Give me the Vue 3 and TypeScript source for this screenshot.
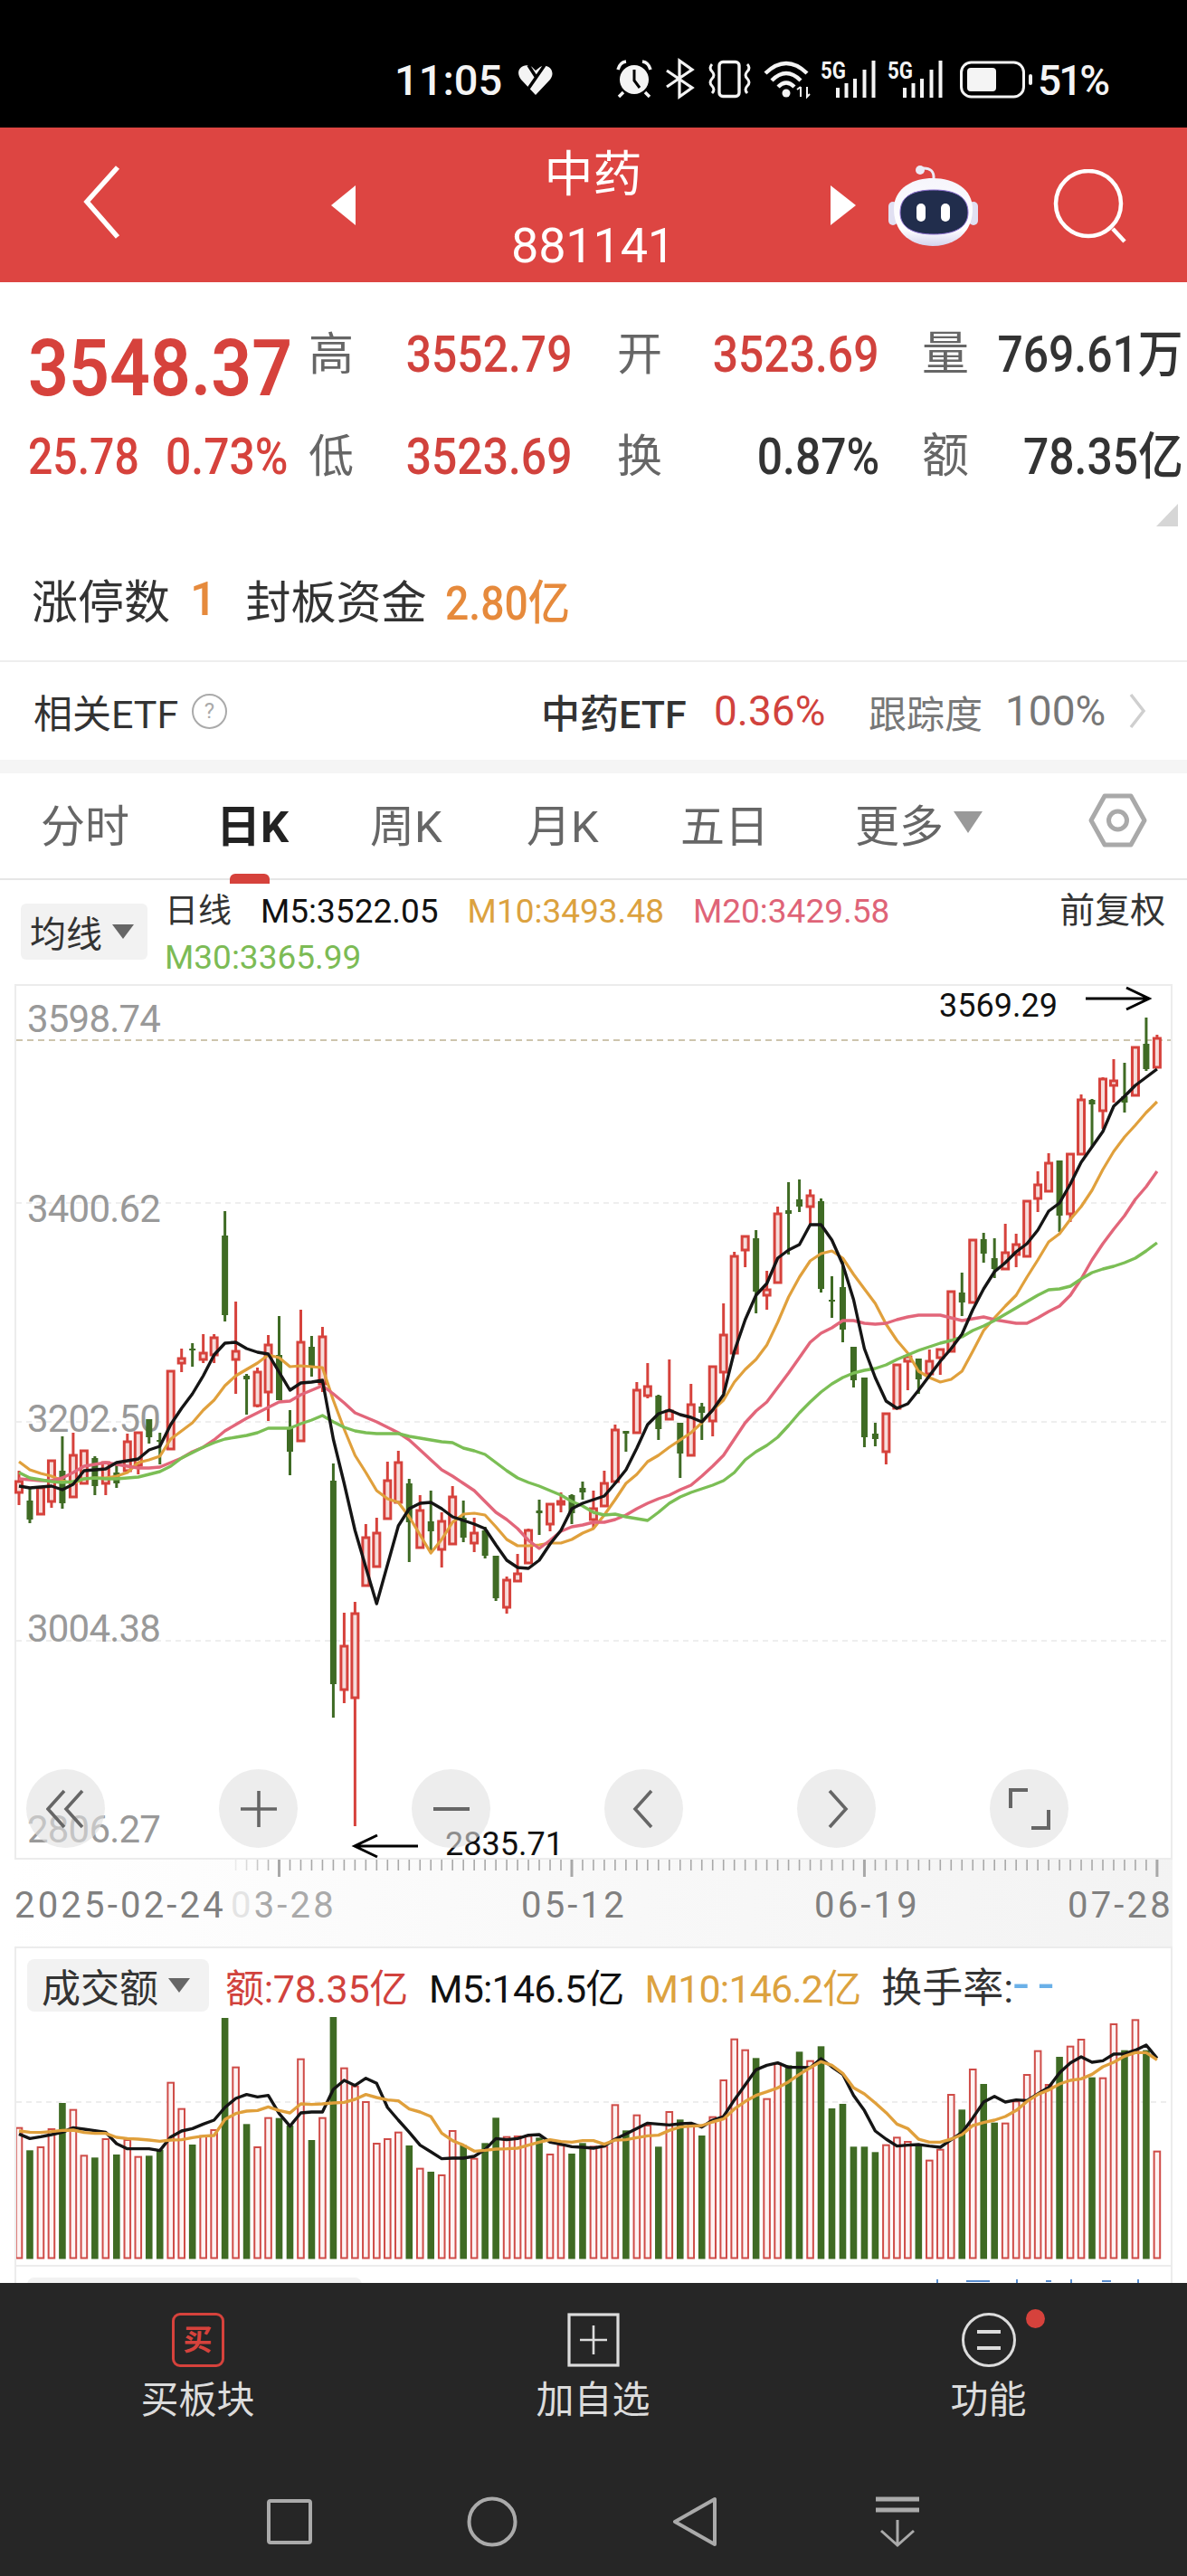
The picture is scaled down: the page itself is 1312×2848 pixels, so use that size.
<script setup lang="ts">
// Sector daily K-line page: quote header, candle chart with moving averages, turnover panel.
const STEP = 11.98
const FIRST_X = 21
const xAt = (i: number) => FIRST_X + STEP * i

const sides =
  'rgrrgrrgrg' + 'rrggrrgrrg' + 'rgrrggrgrg' + 'rrrrrrgrgr' + 'rgrggrrrgr' +
  'rggrrrgrrg' + 'rgrgrrrrgr' + 'rggrgggggg' + 'rrrgrrrgrg' + 'grrrrrgrrg' + 'rrgrgr'

// high, body top, body bottom, low (screen y)
const ohlc: number[][] = [
  [1626,1638,1650,1664],[1645,1659,1680,1684],[1645,1645,1674,1674],[1615,1615,1660,1667],
  [1588,1626,1662,1668],[1584,1609,1655,1655],[1604,1604,1640,1640],[1610,1612,1643,1653],
  [1617,1617,1640,1653],[1616,1628,1640,1645],[1585,1594,1626,1626],[1584,1584,1620,1630],
  [1569,1569,1589,1596],[1584,1592,1594,1619],[1516,1516,1602,1602],[1491,1502,1507,1517],
  [1485,1491,1493,1511],[1475,1496,1503,1507],[1475,1479,1498,1507],[1339,1366,1454,1461],
  [1439,1494,1503,1541],[1519,1521,1525,1564],[1512,1517,1554,1556],[1476,1487,1539,1571],
  [1455,1498,1548,1548],[1559,1578,1605,1631],[1448,1484,1593,1593],[1477,1489,1510,1522],
  [1467,1478,1530,1539],[1618,1637,1862,1899],[1783,1820,1868,1883],[1771,1784,1877,2019],
  [1685,1700,1753,1753],[1678,1695,1732,1732],[1616,1637,1679,1679],[1604,1617,1661,1661],
  [1635,1640,1683,1727],[1653,1670,1711,1711],[1648,1682,1693,1717],[1672,1682,1713,1733],
  [1643,1655,1707,1707],[1659,1678,1700,1705],[1678,1695,1706,1716],[1688,1692,1720,1723],
  [1720,1720,1767,1770],[1743,1747,1777,1784],[1718,1740,1748,1748],[1690,1692,1728,1728],
  [1658,1670,1673,1697],[1663,1663,1685,1693],[1650,1660,1663,1672],[1652,1653,1673,1685],
  [1638,1645,1650,1658],[1648,1668,1680,1690],[1626,1640,1665,1665],[1575,1581,1638,1640],
  [1582,1582,1585,1605],[1528,1537,1584,1584],[1507,1533,1543,1546],[1542,1543,1580,1592],
  [1503,1560,1569,1569],[1573,1573,1607,1634],[1530,1553,1609,1609],[1551,1555,1562,1592],
  [1511,1511,1571,1588],[1441,1476,1517,1540],[1384,1389,1496,1496],[1367,1367,1382,1401],
  [1360,1369,1428,1452],[1405,1426,1432,1448],[1334,1342,1418,1418],[1307,1338,1342,1387],
  [1304,1326,1334,1340],[1315,1322,1334,1355],[1325,1328,1425,1429],[1411,1437,1438,1457],
  [1394,1423,1470,1484],[1489,1489,1526,1534],[1523,1523,1589,1600],[1573,1585,1591,1599],
  [1563,1563,1605,1619],[1509,1509,1557,1557],[1500,1500,1505,1537],[1502,1502,1525,1541],
  [1492,1505,1519,1519],[1492,1492,1501,1520],[1428,1428,1494,1494],[1407,1429,1440,1455],
  [1371,1371,1440,1440],[1363,1370,1386,1396],[1369,1391,1403,1413],[1353,1385,1403,1403],
  [1364,1376,1387,1401],[1328,1328,1389,1389],[1295,1310,1325,1340],[1275,1286,1317,1317],
  [1283,1283,1344,1362],[1276,1276,1342,1351],[1210,1216,1276,1276],[1215,1216,1221,1268],
  [1191,1193,1228,1248],[1171,1195,1200,1219],[1175,1212,1219,1230],[1158,1158,1211,1211],
  [1125,1154,1182,1184],[1144,1148,1180,1180],
]

const candles = ohlc.map((c, i) => ({ x: xAt(i), high: c[0], top: c[1], bottom: c[2], low: c[3], up: sides[i] === 'r' }))

const ma5 = [1643,1645,1644,1643,1647,1641,1626,1625,1624,1617,1615,1613,1603,1599,1575,1557,1541,1521,1498,1485,1484,1491,1495,1497,1517,1537,1529,1528,1526,1591,1640,1692,1733,1773,1730,1687,1668,1662,1661,1668,1677,1681,1685,1690,1708,1725,1733,1734,1725,1707,1692,1668,1662,1658,1654,1640,1625,1601,1575,1563,1559,1564,1567,1572,1559,1542,1494,1459,1432,1419,1391,1382,1376,1354,1354,1371,1398,1437,1491,1523,1549,1557,1552,1537,1521,1505,1491,1475,1448,1425,1406,1396,1384,1375,1360,1339,1330,1309,1285,1268,1251,1223,1212,1200,1191,1182]
const ma10 = [1616,1625,1629,1632,1637,1640,1635,1634,1634,1632,1628,1617,1614,1610,1591,1582,1573,1559,1548,1532,1521,1514,1507,1498,1501,1511,1510,1511,1512,1548,1580,1609,1628,1648,1657,1661,1677,1697,1717,1702,1683,1674,1673,1675,1688,1702,1709,1709,1708,1706,1706,1702,1695,1690,1675,1658,1640,1630,1616,1609,1600,1592,1584,1573,1559,1548,1528,1514,1503,1487,1462,1434,1412,1394,1386,1383,1391,1409,1425,1441,1464,1482,1496,1516,1523,1528,1525,1516,1494,1471,1457,1444,1432,1412,1393,1373,1364,1348,1334,1316,1293,1273,1257,1244,1230,1218]
const ma20 = [1635,1636,1637,1637,1634,1628,1621,1619,1617,1619,1621,1623,1623,1622,1617,1612,1605,1600,1592,1582,1575,1568,1562,1556,1550,1549,1542,1537,1532,1541,1551,1562,1567,1572,1578,1584,1592,1603,1614,1625,1632,1640,1648,1660,1672,1680,1690,1703,1712,1703,1693,1688,1686,1683,1683,1680,1675,1668,1662,1657,1653,1647,1642,1632,1621,1609,1591,1573,1560,1550,1534,1518,1501,1484,1474,1468,1460,1460,1463,1464,1463,1459,1456,1454,1454,1454,1457,1460,1458,1456,1459,1461,1463,1463,1457,1450,1444,1432,1414,1393,1375,1359,1344,1326,1312,1295]
const ma30 = [1628,1634,1636,1638,1639,1638,1635,1634,1635,1635,1634,1633,1630,1627,1621,1612,1606,1600,1595,1591,1589,1587,1584,1579,1579,1579,1574,1570,1565,1572,1578,1582,1584,1585,1585,1585,1588,1590,1592,1594,1595,1601,1604,1608,1617,1626,1634,1639,1643,1648,1653,1660,1665,1672,1675,1674,1677,1679,1681,1672,1662,1655,1650,1646,1642,1637,1628,1614,1605,1598,1589,1576,1562,1550,1539,1530,1523,1518,1515,1513,1509,1503,1498,1493,1489,1485,1482,1478,1471,1466,1460,1453,1446,1439,1432,1426,1425,1422,1414,1407,1403,1400,1396,1391,1383,1374]

const toPoints = (ys: number[]) => ys.map((y, i) => `${xAt(i).toFixed(1)},${y}`).join(' ')
const priceLines = [
  { color: '#E0A03C', width: 3.2, points: toPoints(ma10) },
  { color: '#E2667A', width: 3.4, points: toPoints(ma20) },
  { color: '#7BBE55', width: 3.4, points: toPoints(ma30) },
  { color: '#151515', width: 3.4, points: toPoints(ma5) },
]

const axisLabels = [
  { text: '3598.74', y: 1141 }, { text: '3400.62', y: 1351 }, { text: '3202.50', y: 1583 },
  { text: '3004.38', y: 1815 }, { text: '2806.27', y: 2037 },
]

// Turnover panel, y offsets are measured down from y = 2120 at a third of a pixel
const panelY = (v: number) => 2120 + v / 3
const turnoverTops = [698,772,762,702,615,638,790,796,735,786,738,794,790,770,548,635,753,725,705,333,497,685,762,665,665,690,470,738,665,330,500,560,612,750,735,713,756,833,843,855,708,755,800,748,664,728,726,725,730,786,755,783,748,760,760,622,706,656,690,760,645,670,685,723,662,540,404,440,466,602,485,490,445,476,427,633,618,760,760,778,755,730,744,750,806,770,588,637,504,552,680,683,610,522,443,555,462,428,405,530,533,354,440,340,440,776]
const turnoverBars = turnoverTops.map((t, i) => {
  const y = panelY(t)
  return { x: xAt(i), y, h: 2496.5 - y, up: sides[i] === 'r' }
})
const turnoverM5 = [718,733,727,720,712,697,702,707,712,750,767,767,767,773,728,708,700,685,672,630,600,587,595,590,650,692,648,645,645,570,540,557,533,550,630,672,712,755,777,800,798,798,792,770,733,737,733,722,720,745,752,760,762,765,758,735,718,700,682,685,688,684,682,695,672,660,605,555,505,490,482,497,497,498,468,495,520,590,640,708,735,758,755,753,758,762,737,713,665,612,593,612,605,607,585,563,515,482,462,480,475,453,452,440,423,467]
const turnoverM10 = [708,712,713,710,706,705,713,716,716,729,733,735,738,742,738,737,730,725,723,670,650,642,640,628,640,648,618,620,618,615,613,603,587,597,605,608,635,645,660,715,740,755,775,772,768,767,765,755,745,737,743,745,740,740,752,738,737,730,724,722,706,695,692,690,678,668,635,610,590,578,565,545,520,498,478,490,517,565,585,615,647,685,700,735,745,745,735,720,690,680,672,660,640,610,587,572,552,540,535,520,495,480,460,448,448,472]
const turnoverLines = [
  { color: '#151515', points: toPoints(turnoverM5.map(panelY)) },
  { color: '#E0A03C', points: toPoints(turnoverM10.map(panelY)) },
]

// Time-axis ruler: one tick per session, heavier every 27 sessions
const rulerTicks = Array.from({ length: 86 }, (_, n) => {
  const i = n + 20
  const major = (i - 24) % 27 === 0
  return { x: xAt(i), major, opacity: Math.min(1, (n + 1) / 5) }
})

const tabs = [
  { label: '分时', active: false }, { label: '日K', active: true }, { label: '周K', active: false },
  { label: '月K', active: false }, { label: '五日', active: false },
]
</script>

<template>
  <div class="page">
    <div class="status">
      <span class="clock">11:05</span>
      <svg class="heart" viewBox="573 72 38 34" width="38" height="34">
        <path d="M592 105 L576 88 C568 78 578 68 588 74 L592 78 L597 74 C606 69 615 79 608 88 Z" fill="#f4f4f4" />
        <path d="M584 72 L593 86 M602 72 L584 98" stroke="#000" stroke-width="3.5" fill="none" />
      </svg>
      <svg class="tray" viewBox="676 62 470 54" width="470" height="54">
        <circle cx="701" cy="89" r="16" fill="#f4f4f4" />
        <path d="M701 78 V90 L707 98" stroke="#000" stroke-width="3" fill="none" />
        <path d="M683 78 Q685 70 692 69 M719 78 Q717 70 710 69 M689 103 L684 108 M713 103 L718 108" stroke="#f4f4f4" stroke-width="3.5" fill="none" />
        <path d="M737 79 L765 98 L751 108 V68 L765 78 L737 97" stroke="#f4f4f4" stroke-width="3.2" fill="none" />
        <rect x="795" y="69.5" width="22" height="38" rx="4" stroke="#f4f4f4" stroke-width="3.4" fill="none" />
        <path d="M787 72 q-4 4 0 8 q4 4 0 8 q-4 4 0 8 q4 4 0 8 M826 72 q4 4 0 8 q-4 4 0 8 q4 4 0 8 q-4 4 0 8" stroke="#f4f4f4" stroke-width="3" fill="none" />
        <circle cx="869" cy="104" r="4.5" fill="#f4f4f4" />
        <path d="M846 82 Q869 60 892 82 M853 90 Q869 74 885 90 M860 97 Q869 88 878 97" stroke="#f4f4f4" stroke-width="4.4" fill="none" />
        <path d="M885 108 V97 M881 100 L885 97 M892 97 V108 L895 105" stroke="#f4f4f4" stroke-width="2" fill="none" />
        <text class="net" x="907" y="88" textLength="28" lengthAdjust="spacingAndGlyphs">5G</text>
        <rect x="924" y="98" width="4" height="11" fill="#f4f4f4" />
        <rect x="933.500" y="93" width="4" height="16" fill="#f4f4f4" />
        <rect x="943" y="88" width="4" height="21" fill="#f4f4f4" />
        <rect x="953.500" y="78" width="4" height="31" fill="#f4f4f4" />
        <rect x="963.500" y="68" width="4" height="41" fill="#f4f4f4" />
        <text class="net" x="981" y="88" textLength="28" lengthAdjust="spacingAndGlyphs">5G</text>
        <rect x="998" y="98" width="4" height="11" fill="#f4f4f4" />
        <rect x="1007.500" y="93" width="4" height="16" fill="#f4f4f4" />
        <rect x="1017" y="88" width="4" height="21" fill="#f4f4f4" />
        <rect x="1027.500" y="78" width="4" height="31" fill="#f4f4f4" />
        <rect x="1037.500" y="68" width="4" height="41" fill="#f4f4f4" />
        <rect x="1062.500" y="70" width="69" height="38" rx="11" stroke="#f4f4f4" stroke-width="3" fill="none" />
        <rect x="1069" y="76" width="32" height="26" rx="4" fill="#f4f4f4" />
        <rect x="1137" y="83" width="4" height="12" rx="2" fill="#f4f4f4" />
      </svg>
      <span class="battery-text">51%</span>
    </div>

    <header class="topbar">
      <svg class="back" viewBox="0 0 46 84" width="46" height="84">
        <path d="M40 3 L6 41 L40 80" stroke="#fff" stroke-width="5.500" fill="none" />
      </svg>
      <svg class="step" viewBox="0 0 27 44" width="27" height="44"><path d="M27 0 V44 L0 22 Z" fill="#fff" /></svg>
      <div class="title">
        <div class="title-name">中药</div>
        <div class="title-code">881141</div>
      </div>
      <svg class="step" viewBox="0 0 28 44" width="28" height="44"><path d="M0 0 V44 L28 22 Z" fill="#fff" /></svg>
      <svg class="robot" viewBox="980 176 102 94" width="102" height="94">
        <defs>
          <linearGradient id="shell" x1="0" y1="0" x2="0" y2="1">
            <stop offset="0" stop-color="#f6f5fc" />
            <stop offset="0.75" stop-color="#ffffff" />
            <stop offset="1" stop-color="#d5d3ee" />
          </linearGradient>
        </defs>
        <circle cx="1017" cy="183" r="5" fill="#ecebf6" />
        <path d="M1019 181 Q1033 180 1032 193" stroke="#ecebf6" stroke-width="3" fill="none" />
        <rect x="982" y="218" width="10" height="26" rx="5" fill="#e1e0f2" />
        <rect x="1071" y="218" width="10" height="26" rx="5" fill="#e1e0f2" />
        <path d="M988 226 C988 204 1008 192 1031 192 C1055 192 1075 204 1075 226 C1075 252 1056 267 1031 267 C1007 267 988 252 988 226 Z" fill="url(#shell)" />
        <path d="M995 230 C995 214 1006 205 1032 205 C1058 205 1070 214 1070 230 C1070 246 1056 254 1032 254 C1008 254 995 246 995 230 Z" fill="#212d4c" stroke="#8d6fd0" stroke-width="1" />
        <rect x="1013" y="220" width="10" height="20" rx="5" fill="#fff" />
        <rect x="1040" y="220" width="10" height="20" rx="5" fill="#fff" />
      </svg>
      <svg class="lens" viewBox="0 0 84 84" width="84" height="84">
        <circle cx="40" cy="38" r="36" stroke="#fff" stroke-width="4.500" fill="none" />
        <path d="M67 66 L80 80" stroke="#fff" stroke-width="4.500" />
      </svg>
    </header>

    <section class="quote">
      <div class="quote-grid">
        <div class="last"><span class="squeeze left">3548.37</span></div>
        <div class="k">高</div>
        <div class="v red"><span class="squeeze">3552.79</span></div>
        <div class="k">开</div>
        <div class="v v2 red"><span class="squeeze">3523.69</span></div>
        <div class="k k3">量</div>
        <div class="v v3 dark"><span class="squeeze">769.61万</span></div>

        <div class="change"><span class="squeeze left">25.78</span><span class="squeeze left pct">0.73%</span></div>
        <div class="k">低</div>
        <div class="v red"><span class="squeeze">3523.69</span></div>
        <div class="k">换</div>
        <div class="v v2 dark"><span class="squeeze">0.87%</span></div>
        <div class="k k3">额</div>
        <div class="v v3 dark"><span class="squeeze">78.35亿</span></div>
      </div>
      <div class="fold">
        <svg viewBox="0 0 24 25" width="24" height="25"><path d="M24 0 V25 H0 Z" fill="#d6d6d6" /></svg>
      </div>
      <div class="limit">
        <span>涨停数</span><span class="limit-num one">1</span>
        <span class="limit-b">封板资金</span><span class="limit-num"><span class="squeeze left">2.80亿</span></span>
      </div>
    </section>

    <section class="etf">
      <span class="etf-title">相关ETF</span>
      <span class="help">?</span>
      <span class="etf-name">中药ETF</span>
      <span class="etf-pct">0.36%</span>
      <span class="etf-track">跟踪度</span>
      <span class="etf-full">100%</span>
      <svg class="etf-more" viewBox="0 0 20 40" width="20" height="40">
        <path d="M3 2 L17 20 L3 38" stroke="#cfcfcf" stroke-width="3.500" fill="none" />
      </svg>
    </section>

    <div class="band"></div>

    <nav class="tabs">
      <span v-for="t in tabs" :key="t.label" class="tab" :class="{ on: t.active }">{{ t.label }}</span>
      <span class="tab more">更多<i class="caret big"></i></span>
      <svg class="hex" viewBox="0 0 65 62" width="65" height="62">
        <path d="M3 31 L18 4 H47 L62 31 L47 58 H18 Z" stroke="#a9a9a9" stroke-width="5" stroke-linejoin="round" fill="none" />
        <circle cx="32.500" cy="31" r="10" stroke="#a9a9a9" stroke-width="5" fill="none" />
      </svg>
    </nav>

    <section class="ma-head">
      <div class="ma-pick"><span>均线</span><i class="caret"></i></div>
      <div class="ma-values">
        <div class="ma-row">
          <span class="c-dark">日线</span>
          <span class="c-black">M5:3522.05</span>
          <span class="c-orange">M10:3493.48</span>
          <span class="c-pink">M20:3429.58</span>
          <span class="c-dark adj">前复权</span>
        </div>
        <div class="ma-row"><span class="c-green">M30:3365.99</span></div>
      </div>
    </section>

    <section class="chart">
      <svg viewBox="18 1090 1276 964" width="1276" height="964" class="chart-svg">
        <line x1="18" x2="1294" y1="1150" y2="1150" stroke="#bdb392" stroke-width="1.600" stroke-dasharray="7 5" />
        <line v-for="y in [1330, 1572, 1814]" :key="y" x1="18" x2="1294" :y1="y" :y2="y" stroke="#dedede" stroke-width="1.200" stroke-dasharray="6 5" />
        <text v-for="a in axisLabels" :key="a.text" class="axis" x="30" :y="a.y">{{ a.text }}</text>

        <g v-for="c in candles" :key="c.x">
          <template v-if="c.up">
            <line :x1="c.x" :x2="c.x" :y1="c.high" :y2="c.top" stroke="#d6423c" stroke-width="3" />
            <line :x1="c.x" :x2="c.x" :y1="c.bottom" :y2="c.low" stroke="#d6423c" stroke-width="3" />
            <rect :x="c.x - 3.500" :y="c.top" width="7" :height="Math.max(c.bottom - c.top, 1)" fill="#f6dcda" stroke="#d6423c" stroke-width="3" />
          </template>
          <template v-else>
            <line :x1="c.x" :x2="c.x" :y1="c.high" :y2="c.low" stroke="#3f6b24" stroke-width="3" />
            <rect :x="c.x - 3.500" :y="c.top" width="7" :height="Math.max(c.bottom - c.top, 2)" fill="#3f6b24" />
          </template>
        </g>
        <polyline v-for="l in priceLines" :key="l.color" :points="l.points" :stroke="l.color" :stroke-width="l.width" stroke-linejoin="round" fill="none" />

        <text class="mark" x="1038" y="1124">3569.29</text>
        <path d="M1200 1104 H1269 M1245 1092 L1270 1104 L1245 1116" stroke="#000" stroke-width="3" fill="none" />
        <text class="mark" x="492" y="2051">2835.71</text>
        <path d="M462 2041 H393 M417 2029 L392 2041 L417 2053" stroke="#000" stroke-width="3" fill="none" />
      </svg>

      <div class="chart-tools">
        <span class="tool">
          <svg viewBox="0 0 44 44" width="44" height="44"><path d="M20 2 L2 22 L20 42 M40 2 L22 22 L40 42" stroke="#666" stroke-width="3.600" fill="none" /></svg>
        </span>
        <span class="tool">
          <svg viewBox="0 0 44 44" width="44" height="44"><path d="M2 22 H42 M22 2 V42" stroke="#666" stroke-width="3.600" fill="none" /></svg>
        </span>
        <span class="tool">
          <svg viewBox="0 0 44 44" width="44" height="44"><path d="M2 22 H42" stroke="#666" stroke-width="4" fill="none" /></svg>
        </span>
        <span class="tool">
          <svg viewBox="0 0 44 44" width="44" height="44"><path d="M30 2 L12 22 L30 42" stroke="#666" stroke-width="3.600" fill="none" /></svg>
        </span>
        <span class="tool">
          <svg viewBox="0 0 44 44" width="44" height="44"><path d="M14 2 L32 22 L14 42" stroke="#666" stroke-width="3.600" fill="none" /></svg>
        </span>
        <span class="tool">
          <svg viewBox="0 0 48 48" width="48" height="48"><path d="M3 23 V3 H22 M45 25 V45 H26" stroke="#666" stroke-width="4" fill="none" /></svg>
        </span>
      </div>
    </section>

    <section class="ruler">
      <svg viewBox="16 2056 1280 20" width="1280" height="20" class="ruler-svg">
        <line v-for="t in rulerTicks" :key="t.x" :x1="t.x" :x2="t.x" y1="2056" :y2="t.major ? 2075 : 2068" stroke="#a8a8a8" :stroke-width="t.major ? 3 : 1.600" :opacity="t.opacity" />
      </svg>
      <div class="dates">
        <span>2025-02-24</span>
        <span class="soft"><b class="softer">0</b>3-28</span>
        <span>05-12</span>
        <span>06-19</span>
        <span>07-28</span>
      </div>
    </section>

    <section class="turnover">
      <div class="turnover-head">
        <div class="turnover-pick"><span>成交额</span><i class="caret"></i></div>
        <span class="c-red narrow">额:78.35亿</span>
        <span class="c-black tight">M5:146.5亿</span>
        <span class="c-orange tight">M10:146.2亿</span>
        <span class="c-dark rate">换手率:<b class="c-blue">--</b></span>
      </div>
      <svg viewBox="18 2230 1276 272" width="1276" height="272" class="turnover-svg">
        <line x1="18" x2="1294" y1="2324" y2="2324" stroke="#dcdcdc" stroke-width="1.200" stroke-dasharray="6 5" />
        <template v-for="b in turnoverBars" :key="b.x">
          <rect v-if="b.up" :x="b.x - 3.300" :y="b.y" width="6.600" :height="b.h" fill="#fdf3f3" stroke="#cf4c48" stroke-width="2" />
          <rect v-else :x="b.x - 3.800" :y="b.y" width="7.600" :height="b.h + 1" fill="#3f6b24" />
        </template>
        <polyline v-for="l in turnoverLines" :key="l.color" :points="l.points" :stroke="l.color" stroke-width="3.400" stroke-linejoin="round" fill="none" />
      </svg>
    </section>

    <section class="next-panel">
      <div class="next-pick"></div>
      <svg class="next-tips" viewBox="0 0 240 6" width="240" height="6">
        <path d="M4 2 V6 M36 4 H62 M92 2 V6 M124 4 H130 M152 2 V6 M186 4 H196 M226 2 V6" stroke="#5b8fd0" stroke-width="2" />
      </svg>
    </section>

    <footer class="dock">
      <div class="actions">
        <div class="action">
          <span class="buy-icon">买</span>
          <span>买板块</span>
        </div>
        <div class="action">
          <svg viewBox="0 0 60 60" width="60" height="60">
            <rect x="3" y="2" width="54" height="56" stroke="#dcdcdc" stroke-width="3.200" fill="none" />
            <path d="M15 30 H45 M30 14 V46" stroke="#dcdcdc" stroke-width="2.600" />
          </svg>
          <span>加自选</span>
        </div>
        <div class="action with-dot">
          <svg viewBox="0 0 60 60" width="60" height="60">
            <circle cx="30" cy="30" r="28.500" stroke="#dcdcdc" stroke-width="3" fill="none" />
            <path d="M17 21 H43 M17 39 H43" stroke="#dcdcdc" stroke-width="4" />
          </svg>
          <i class="dot"></i>
          <span>功能</span>
        </div>
      </div>
      <div class="softkeys">
        <svg viewBox="0 0 54 56" width="54" height="56"><rect x="4" y="5" width="46" height="46" rx="2" stroke="#aaa" stroke-width="4" fill="none" /></svg>
        <svg viewBox="0 0 56 56" width="56" height="56"><circle cx="28" cy="28" r="25.500" stroke="#aaa" stroke-width="4" fill="none" /></svg>
        <svg viewBox="0 0 56 56" width="56" height="56"><path d="M50 3 V53 L6 28 Z" stroke="#aaa" stroke-width="4" stroke-linejoin="round" fill="none" /></svg>
        <svg viewBox="0 0 56 56" width="56" height="56">
          <path d="M4 3 H52 M4 15 H52" stroke="#aaa" stroke-width="5" />
          <path d="M28 26 V54 M10 38 L28 54 L46 38" stroke="#aaa" stroke-width="3" fill="none" />
        </svg>
      </div>
    </footer>
  </div>
</template>

<style scoped>
.page {
  width: 1312px;
  height: 2848px;
  overflow: hidden;
  background: #fff;
  color: #333;
  font-family: Roboto, "Noto Sans CJK SC", sans-serif;
  display: flex;
  flex-direction: column;
}

.status {
  box-sizing: border-box;
  flex: 0 0 141px;
  background: #000;
  color: #f4f4f4;
  display: flex;
  align-items: center;
  padding: 37px 0 0 436px;
}
.clock { font-size: 47px; font-weight: 500; line-height: 54px; width: 137px; }
.heart { margin-right: 65px; }
.tray { flex: none; margin-top: -2px; }
.battery-text { font-size: 46px; font-weight: 500; letter-spacing: -3px; margin-left: 1px; }
.net { font-size: 26px; font-weight: 700; fill: #f4f4f4; }

.topbar {
  flex: 0 0 171px;
  background: #dd4542;
  color: #fff;
  display: flex;
  align-items: center;
  padding-left: 90px;
}
.step { margin: 0; flex: none; }
.back { margin-right: 230px; flex: none; margin-top: -5px; }
.title { flex: 0 0 525px; text-align: center; margin-top: 12px; }
.title-name { font-size: 54px; line-height: 78px; }
.title-code { font-size: 54px; line-height: 78px; letter-spacing: -0.200px; }
.robot { margin-left: 34px; flex: none; margin-top: 3px; }
.lens { margin-left: 81px; flex: none; margin-top: 4px; }

.quote {
  flex: 0 0 418px;
  box-sizing: border-box;
  padding: 40px 0 0 31px;
}
.quote-grid {
  display: grid;
  grid-template-columns: 310px 111px 230px 109px 228px 83px 208px;
  grid-template-rows: 80px 80px;
  row-gap: 33px;
  align-items: center;
}
.squeeze {
  display: inline-block;
  transform: scaleX(0.89);
  transform-origin: right center;
  white-space: nowrap;
}
.squeeze.left { transform-origin: left center; }
.last { font-size: 88px; font-weight: 600; color: #d6423c; margin-top: 30px; white-space: nowrap; line-height: 80px; }
.last .squeeze { transform: scaleX(0.895); }
.change { font-size: 56px; font-weight: 500; color: #d6423c; white-space: nowrap; display: flex; }
.change .squeeze { transform: scaleX(0.86); }
.change .pct { margin-left: 9px; transform: scaleX(0.89); }
.k { font-size: 50px; color: #666; line-height: 80px; }
.k3 { font-size: 52px; }
.v {
  display: flex;
  justify-content: flex-end;
  font-size: 56px;
  font-weight: 500;
  margin-right: 49px;
  line-height: 80px;
}
.v2 { margin-right: 47px; }
.v3 { margin-right: 2px; }
.red { color: #d1423d; }
.dark { color: #333; }
.fold { display: flex; justify-content: flex-end; padding-right: 10px; margin-top: 12px; height: 25px; }
.limit {
  display: flex;
  align-items: center;
  height: 46px;
  margin: 57px 0 0 4px;
  font-size: 51px;
  color: #333;
}
.limit-num { color: #e68a3c; font-weight: 500; font-size: 52px; }
.one { margin-left: 22px; }
.limit-b { margin-left: 32px; margin-right: 20px; font-size: 50px; }

.etf {
  flex: 0 0 110px;
  box-sizing: border-box;
  border-top: 2px solid #eeeeee;
  display: flex;
  align-items: center;
  padding-left: 37px;
  font-size: 43px;
}
.etf-title { width: 175px; }
.help {
  box-sizing: border-box;
  width: 39px;
  height: 39px;
  border-radius: 50%;
  border: 2px solid #aaa;
  color: #aaa;
  font-size: 24px;
  display: flex;
  align-items: center;
  justify-content: center;
}
.etf-name { margin-left: 347px; width: 191px; font-weight: 500; }
.etf-pct { color: #d1423d; width: 171px; font-size: 46px; }
.etf-track { color: #777; width: 151px; font-size: 42px; }
.etf-full { color: #777; width: 136px; font-size: 46px; }

.band { flex: 0 0 15px; background: #f5f5f5; }

.tabs {
  flex: 0 0 118px;
  box-sizing: border-box;
  border-bottom: 2px solid #e6e6e6;
  display: flex;
  align-items: center;
  padding: 0 0 8px 45px;
  font-size: 49px;
  color: #666;
}
.tab { position: relative; flex: none; }
.tab:nth-child(1) { width: 194px; }
.tab:nth-child(2) { width: 170px; }
.tab:nth-child(3) { width: 173px; }
.tab:nth-child(4) { width: 170px; }
.tab:nth-child(5) { width: 193px; }
.tab.on { color: #222; font-weight: 700; }
.tab.on::after {
  content: "";
  position: absolute;
  left: 15px;
  bottom: -32px;
  width: 44px;
  height: 11px;
  border-radius: 6px 6px 0 0;
  background: #d6423c;
}
.more { display: flex; align-items: center; width: 258px; }
.caret {
  display: inline-block;
  width: 0;
  height: 0;
  margin-left: 11px;
  border-left: 12px solid transparent;
  border-right: 12px solid transparent;
  border-top: 16px solid #666;
}
.caret.big {
  border-left-width: 16px;
  border-right-width: 16px;
  border-top: 24px solid #999;
  margin-top: 0;
}
.hex { flex: none; margin-top: -4px; }

.ma-head {
  flex: 0 0 115px;
  display: flex;
  padding-left: 23px;
  box-sizing: border-box;
}
.ma-pick {
  flex: 0 0 140px;
  box-sizing: border-box;
  height: 62px;
  margin-top: 26px;
  background: #f2f2f2;
  border-radius: 6px;
  display: flex;
  align-items: center;
  padding-left: 10px;
  font-size: 40px;
}
.ma-values { margin-left: 19px; padding-top: 9px; font-size: 37px; flex: 1; }
.ma-row { display: flex; gap: 32px; line-height: 51px; white-space: nowrap; }
.adj { margin-left: 156px; font-size: 39px; color: #444; }
.c-dark { color: #333; }
.c-black { color: #111; }
.c-orange { color: #dca23f; }
.c-pink { color: #df6478; }
.c-green { color: #7cbb55; }
.c-red { color: #d1423d; }
.c-blue { color: #6ab0e8; font-weight: 400; font-size: 60px; line-height: 0; letter-spacing: 11px; }

.chart {
  position: relative;
  flex: 0 0 968px;
  box-sizing: border-box;
  width: 1280px;
  margin-left: 16px;
  border: 2px solid #ececec;
}
.chart-svg { display: block; overflow: visible; }
.axis { font-size: 42px; fill: #999; letter-spacing: -0.800px; }
.mark { font-size: 36px; fill: #111; }
.chart-tools {
  position: absolute;
  top: 866px;
  left: 11px;
  display: flex;
  gap: 126px;
}
.tool {
  width: 87px;
  height: 87px;
  border-radius: 50%;
  background: rgba(225, 225, 225, 0.6);
  display: flex;
  align-items: center;
  justify-content: center;
}

.ruler {
  flex: 0 0 96px;
  width: 1280px;
  margin-left: 16px;
  background: linear-gradient(100deg, #fff 0%, #f9f9f9 45%, #f3f3f3 100%);
}
.ruler-svg { display: block; }
.dates {
  display: grid;
  grid-template-columns: 239px 321px 324px 280px auto;
  padding-left: 0;
  margin-top: 7px;
  font-size: 40px;
  letter-spacing: 3.200px;
  line-height: 48px;
  color: #808080;
  white-space: nowrap;
}
.soft { color: #aaa; }
.softer { color: #e4e4e4; font-weight: 400; }

.turnover {
  flex: 0 0 352px;
  box-sizing: border-box;
  width: 1280px;
  margin-left: 16px;
  background: #fff;
  border: 2px solid #ececec;
  border-bottom: none;
}
.turnover-head {
  height: 76px;
  display: flex;
  align-items: center;
  gap: 23px;
  padding: 5px 0 0 12px;
  box-sizing: border-box;
  font-size: 43px;
  white-space: nowrap;
}
.narrow { letter-spacing: -0.300px; }
.tight { letter-spacing: -0.850px; }
.rate { font-size: 45px; }
.turnover-pick {
  box-sizing: border-box;
  flex: 0 0 201px;
  height: 58px;
  margin-right: -5px;
  padding-left: 16px;
  background: #f2f2f2;
  border-radius: 8px;
  display: flex;
  align-items: center;
  color: #333;
}
.turnover-svg { display: block; }

.next-panel {
  position: relative;
  flex: 0 0 20px;
  box-sizing: border-box;
  width: 1280px;
  margin-left: 16px;
  border: 2px solid #ececec;
  border-bottom: none;
  overflow: hidden;
}
.next-pick { width: 370px; height: 10px; margin: 12px 0 0 12px; background: #f2f2f2; border-radius: 8px 8px 0 0; }
.next-tips { position: absolute; right: 22px; bottom: 0; }

.dock {
  flex: 0 0 324px;
  background: #262626;
  color: #dcdcdc;
  font-size: 42px;
  box-sizing: border-box;
  padding-top: 33px;
}
.actions { display: grid; grid-template-columns: repeat(3, 437px); }
.action { position: relative; display: flex; flex-direction: column; align-items: center; gap: 9px; line-height: 56px; }
.action svg { display: block; }
.buy-icon {
  box-sizing: border-box;
  width: 58px;
  height: 60px;
  border: 3px solid #d6423c;
  border-radius: 9px;
  color: #d6423c;
  font-size: 32px;
  font-weight: 700;
  line-height: 54px;
  text-align: center;
}
.dot {
  position: absolute;
  left: 260px;
  top: -4px;
  width: 21px;
  height: 21px;
  border-radius: 50%;
  background: #d6423c;
}
.softkeys {
  display: grid;
  grid-template-columns: repeat(4, 224px);
  justify-items: center;
  padding-left: 208px;
  margin-top: 78px;
}
</style>
<style>
html, body { margin: 0; background: #fff; }
</style>
